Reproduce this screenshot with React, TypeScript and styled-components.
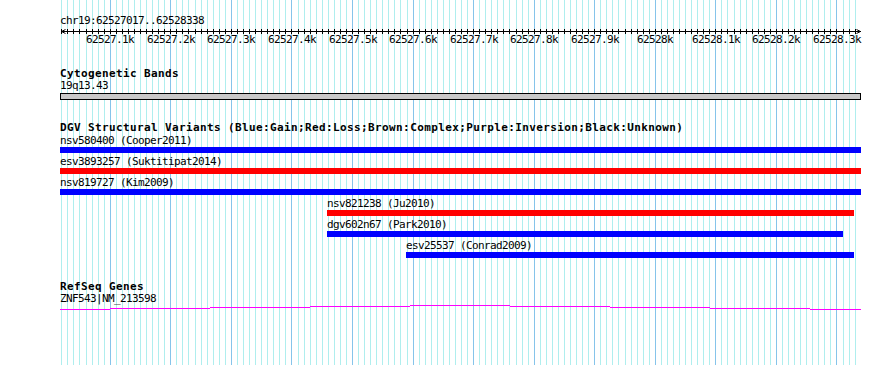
import React from "react";
import styled, { createGlobalStyle } from "styled-components";

// genomic window shown by the panel
const START = 62527017;
const END = 62528338;
const LEFT = 60;
const SPAN = 800;
const FULL_RIGHT = 861;

const xOf = (bp: number) => LEFT + ((bp - START) * SPAN) / (END - START);

const GlobalStyle = createGlobalStyle`
  html, body {
    margin: 0;
    padding: 0;
    background: #ffffff;
  }
`;

const Canvas = styled.div`
  position: relative;
  width: 890px;
  height: 365px;
  overflow: hidden;
  background: #ffffff;
  color: #000;
  font-family: "DejaVu Sans Mono", "Liberation Mono", monospace;
  font-size: 11px;
  letter-spacing: -0.62px;
`;

const GridLayer = styled.svg`
  position: absolute;
  top: 0;
  left: 0;
  z-index: 0;
`;

const Tracks = styled.div`
  position: relative;
  z-index: 1;
  display: flex;
  flex-direction: column;
  padding-left: ${LEFT}px;
`;

const ChrLabel = styled.div`
  margin-top: 15px;
  height: 12px;
  line-height: 12px;
  white-space: pre;
`;

const RulerSvg = styled.svg`
  display: block;
  margin-left: -${LEFT}px;
`;

const TickRow = styled.div`
  position: relative;
  height: 12px;
  line-height: 12px;
`;

const TickLabel = styled.span`
  position: absolute;
  top: 0;
  white-space: pre;
`;

const Track = styled.section<{ $gap: number }>`
  display: flex;
  flex-direction: column;
  margin-top: ${(p) => p.$gap}px;
`;

const TrackTitle = styled.div`
  height: 12px;
  line-height: 12px;
  font-weight: bold;
  letter-spacing: 0.38px;
  white-space: pre;
`;

const SubLabel = styled.div<{ $h?: number }>`
  height: ${(p) => p.$h ?? 12}px;
  line-height: ${(p) => p.$h ?? 12}px;
  white-space: pre;
`;

const Band = styled.div`
  margin-top: 1px;
  width: ${FULL_RIGHT - LEFT - 2}px;
  height: 5px;
  background: #c8c8c8;
  border: 1px solid #000;
`;

const FeatureRow = styled.div`
  display: flex;
  flex-direction: column;
  margin-bottom: 2px;
`;

const FeatureLabel = styled.div`
  height: 13px;
  line-height: 13px;
  white-space: pre;
`;

const Bar = styled.div<{ $color: string }>`
  height: 6px;
  background: ${(p) => p.$color};
`;

const GeneSvg = styled.svg`
  display: block;
  margin-left: -${LEFT}px;
`;

type Variant = { name: string; from?: number; to?: number; color: string };

const variants: Variant[] = [
  { name: "nsv580400 (Cooper2011)", color: "#0000ff" },
  { name: "esv3893257 (Suktitipat2014)", color: "#ff0000" },
  { name: "nsv819727 (Kim2009)", color: "#0000ff" },
  { name: "nsv821238 (Ju2010)", from: 62527458, to: 62528328, color: "#ff0000" },
  { name: "dgv602n67 (Park2010)", from: 62527458, to: 62528310, color: "#0000ff" },
  { name: "esv25537 (Conrad2009)", from: 62527588, to: 62528328, color: "#0000ff" },
];

const minorTicks: number[] = [];
for (let bp = Math.ceil(START / 10) * 10; bp <= END; bp += 10) minorTicks.push(bp);
const majorTicks = minorTicks.filter((bp) => bp % 100 === 0);

const tickText = (bp: number) => {
  const k = bp / 1000;
  return `${Number.isInteger(k) ? k : k.toFixed(1)}k`;
};

// intron line of ZNF543, drawn as the stepped line GD produces
const geneSteps: [number, number, number][] = [
  [60, 110, 309],
  [110, 210, 308],
  [210, 310, 307],
  [310, 410, 306],
  [410, 510, 305],
  [510, 610, 306],
  [610, 710, 307],
  [710, 810, 308],
  [810, 861, 309],
];

function Grid() {
  return (
    <GridLayer width={890} height={365} shapeRendering="crispEdges">
      {minorTicks.map((bp) => (
        <rect
          key={bp}
          x={Math.floor(xOf(bp))}
          y={0}
          width={1}
          height={365}
          fill={bp % 100 === 0 ? "#86c4ea" : "#afeeee"}
        />
      ))}
    </GridLayer>
  );
}

function Ruler() {
  return (
    <>
      <ChrLabel>chr19:62527017..62528338</ChrLabel>
      <RulerSvg width={870} height={7}>
        <g shapeRendering="crispEdges" fill="#000">
          <rect x={61} y={4} width={800} height={1} />
          {minorTicks.map((bp) => (
            <rect key={bp} x={Math.floor(xOf(bp))} y={2} width={1} height={5} />
          ))}
        </g>
        <polyline points="65.5,2.5 61.5,4.5 65.5,6.5" fill="none" stroke="#000" strokeWidth={1} />
        <polyline points="856.5,2.5 860.5,4.5 856.5,6.5" fill="none" stroke="#000" strokeWidth={1} />
      </RulerSvg>
      <TickRow>
        {majorTicks.map((bp) => {
          const text = tickText(bp);
          const left = Math.round(xOf(bp) - LEFT - text.length * 3);
          return (
            <TickLabel key={bp} style={{ left }}>
              {text}
            </TickLabel>
          );
        })}
      </TickRow>
    </>
  );
}

export default function App() {
  return (
    <>
      <GlobalStyle />
      <Canvas>
        <Grid />
        <Tracks>
          <Ruler />

          <Track $gap={22}>
            <TrackTitle>Cytogenetic Bands</TrackTitle>
            <SubLabel>19q13.43</SubLabel>
            <Band />
          </Track>

          <Track $gap={22}>
            <TrackTitle>
              DGV Structural Variants (Blue:Gain;Red:Loss;Brown:Complex;Purple:Inversion;Black:Unknown)
            </TrackTitle>
            {variants.map((v) => {
              const left = v.from ? Math.round(xOf(v.from)) : LEFT;
              const right = v.to ? Math.round(xOf(v.to)) : FULL_RIGHT;
              return (
                <FeatureRow key={v.name} style={{ marginLeft: left - LEFT }}>
                  <FeatureLabel>{v.name}</FeatureLabel>
                  <Bar $color={v.color} style={{ width: right - left }} />
                </FeatureRow>
              );
            })}
          </Track>

          <Track $gap={21}>
            <TrackTitle>RefSeq Genes</TrackTitle>
            <SubLabel $h={11}>ZNF543|NM_213598</SubLabel>
            <GeneSvg width={870} height={7} shapeRendering="crispEdges">
              {geneSteps.map(([x1, x2, y]) => (
                <rect key={x1} x={x1} y={y - 304} width={x2 - x1} height={1} fill="#ff00ff" />
              ))}
            </GeneSvg>
          </Track>
        </Tracks>
      </Canvas>
    </>
  );
}
